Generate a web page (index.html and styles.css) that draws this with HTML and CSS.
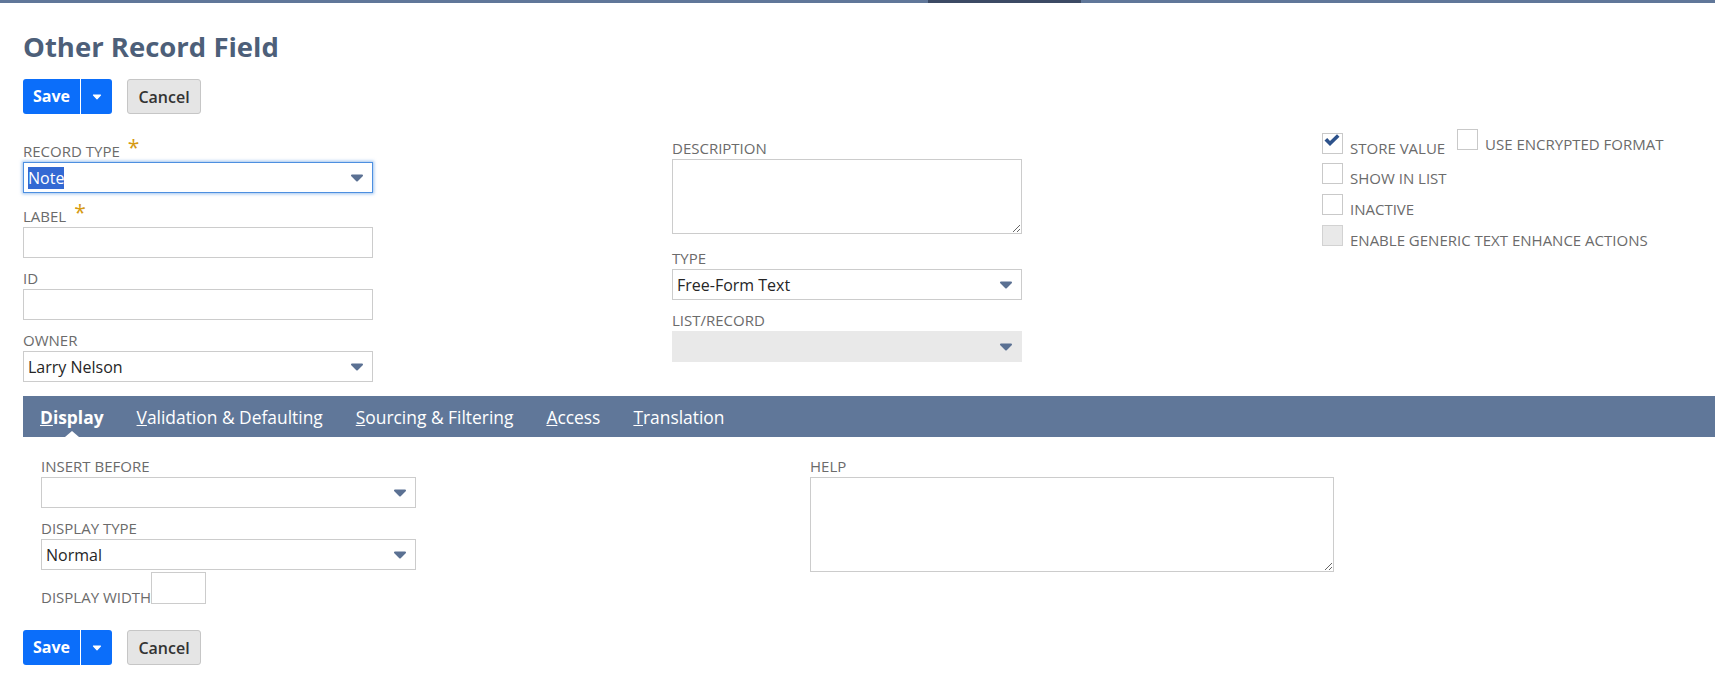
FILE: index.html
```html
<!DOCTYPE html>
<html lang="en">
<head>
  <meta charset="UTF-8">
  <title>Other Record Field</title>
  <link rel="stylesheet" href="styles.css">
</head>
<body>

  <div class="loadbar"><span></span><span class="loadbar-dark"></span><span></span></div>

  <div class="page">
    <h1 class="title">Other Record Field</h1>

    <div class="actions">
      <div class="btn-save">
        <span class="save-main">Save</span>
        <span class="save-more">
          <svg width="10" height="6" viewBox="0 0 10 6"><path d="M1.5 1 H8.5 L5 4.8 Z" fill="#fff" stroke="#fff" stroke-width="1.2" stroke-linejoin="round"/></svg>
        </span>
      </div>
      <button class="btn-cancel">Cancel</button>
    </div>

    <div class="main-form">
      <div class="col col-left">
        <div class="field field-first">
          <label class="lbl">Record Type<span class="req">*</span></label>
          <div class="select focused">
            <span class="sel-text"><span class="picked">Note</span></span>
            <svg class="arrow" width="14" height="8" viewBox="0 0 14 8"><path d="M2 1.5 H12 L7 6.5 Z" fill="#5b7193" stroke="#5b7193" stroke-width="2" stroke-linejoin="round"/></svg>
          </div>
        </div>
        <div class="field">
          <label class="lbl">Label<span class="req">*</span></label>
          <div class="text-input"></div>
        </div>
        <div class="field">
          <label class="lbl">ID</label>
          <div class="text-input"></div>
        </div>
        <div class="field">
          <label class="lbl">Owner</label>
          <div class="select">
            <span class="sel-text">Larry Nelson</span>
            <svg class="arrow" width="14" height="8" viewBox="0 0 14 8"><path d="M2 1.5 H12 L7 6.5 Z" fill="#5b7193" stroke="#5b7193" stroke-width="2" stroke-linejoin="round"/></svg>
          </div>
        </div>
      </div>

      <div class="col col-mid">
        <div class="field field-desc">
          <label class="lbl">Description</label>
          <textarea class="area area-desc"></textarea>
        </div>
        <div class="field">
          <label class="lbl">Type</label>
          <div class="select">
            <span class="sel-text">Free-Form Text</span>
            <svg class="arrow" width="14" height="8" viewBox="0 0 14 8"><path d="M2 1.5 H12 L7 6.5 Z" fill="#5b7193" stroke="#5b7193" stroke-width="2" stroke-linejoin="round"/></svg>
          </div>
        </div>
        <div class="field">
          <label class="lbl">List/Record</label>
          <div class="select disabled">
            <span class="sel-text"></span>
            <svg class="arrow" width="14" height="8" viewBox="0 0 14 8"><path d="M2 1.5 H12 L7 6.5 Z" fill="#5b7193" stroke="#5b7193" stroke-width="2" stroke-linejoin="round"/></svg>
          </div>
        </div>
      </div>

      <div class="col col-right">
        <div class="cb-row">
          <span class="cb"><svg width="19" height="19" viewBox="0 0 19 19"><path d="M1.5 6.5 L4.2 4 L7 7 L14 0.3 L16.5 2.8 L7 12 Z" fill="#2d528b"/></svg></span><span class="cb-text">Store Value</span>
          <span class="cb-extra"><span class="cb"></span><span class="cb-text">Use Encrypted Format</span></span>
        </div>
        <div class="cb-row"><span class="cb"></span><span class="cb-text">Show In List</span></div>
        <div class="cb-row"><span class="cb"></span><span class="cb-text">Inactive</span></div>
        <div class="cb-row"><span class="cb cb-off"></span><span class="cb-text">Enable Generic Text Enhance Actions</span></div>
      </div>
    </div>

    <div class="tabs">
      <div class="tab active"><u>D</u>isplay</div>
      <div class="tab"><u>V</u>alidation &amp; Defaulting</div>
      <div class="tab"><u>S</u>ourcing &amp; Filtering</div>
      <div class="tab"><u>A</u>ccess</div>
      <div class="tab"><u>T</u>ranslation</div>
    </div>

    <div class="tab-body">
      <div class="tab-left">
        <div class="field">
          <label class="lbl">Insert Before</label>
          <div class="select">
            <span class="sel-text"></span>
            <svg class="arrow" width="14" height="8" viewBox="0 0 14 8"><path d="M2 1.5 H12 L7 6.5 Z" fill="#5b7193" stroke="#5b7193" stroke-width="2" stroke-linejoin="round"/></svg>
          </div>
        </div>
        <div class="field field-tight">
          <label class="lbl">Display Type</label>
          <div class="select">
            <span class="sel-text">Normal</span>
            <svg class="arrow" width="14" height="8" viewBox="0 0 14 8"><path d="M2 1.5 H12 L7 6.5 Z" fill="#5b7193" stroke="#5b7193" stroke-width="2" stroke-linejoin="round"/></svg>
          </div>
        </div>
        <div class="width-row">
          <span class="lbl-inline">Display Width</span><span class="small-input"></span>
        </div>
      </div>
      <div class="tab-right">
        <div class="field">
          <label class="lbl">Help</label>
          <textarea class="area area-help"></textarea>
        </div>
      </div>
    </div>

    <div class="actions actions-bottom">
      <div class="btn-save">
        <span class="save-main">Save</span>
        <span class="save-more">
          <svg width="10" height="6" viewBox="0 0 10 6"><path d="M1.5 1 H8.5 L5 4.8 Z" fill="#fff" stroke="#fff" stroke-width="1.2" stroke-linejoin="round"/></svg>
        </span>
      </div>
      <button class="btn-cancel">Cancel</button>
    </div>
  </div>

</body>
</html>
```

FILE: styles.css
```css
body {
  margin: 0;
  font-family: "Open Sans", "Liberation Sans", sans-serif;
  background: #fff;
  color: #333;
}

.loadbar {
  display: grid;
  grid-template-columns: 928px 153px 1fr;
  height: 3px;
}

.loadbar span {
  background: #607799;
}

.loadbar .loadbar-dark {
  background: #3c4a64;
}

.page {
  padding: 0 0 0 23px;
}

.title {
  margin: 25px 0 0;
  font-size: 27.5px;
  line-height: 38px;
  font-weight: 700;
  color: #4d5f79;
}

/* buttons */
.actions {
  display: flex;
  gap: 15px;
  margin-top: 13px;
  height: 35px;
}

.btn-save {
  display: flex;
  width: 89px;
  height: 35px;
  background: #0b6efa;
  border-radius: 3px;
  color: #fff;
}

.save-main {
  width: 57px;
  border-right: 1px solid #fff;
  font-size: 16px;
  font-weight: 700;
  line-height: 35px;
  text-align: center;
}

.save-more {
  flex: 1;
  display: flex;
  align-items: center;
  justify-content: center;
  padding-top: 1px;
}

.btn-cancel {
  width: 74px;
  height: 35px;
  padding: 0;
  background: #e5e5e5;
  border: 1px solid #c6c6c6;
  border-radius: 3px;
  font-family: inherit;
  font-size: 16px;
  font-weight: 600;
  color: #333;
}

/* main form */
.main-form {
  display: grid;
  grid-template-columns: 350px 350px 1fr;
  column-gap: 299px;
  align-items: start;
  margin-top: 14px;
}

.col-left {
  margin-top: 14px;
}

.col-mid {
  margin-top: 11px;
}

.col-right {
  margin-top: 1px;
  margin-left: 1px;
}

.field {
  margin-bottom: 11px;
}

.field:last-child {
  margin-bottom: 0;
}

.field-first {
  margin-bottom: 14px;
}

.field-desc {
  margin-bottom: 15px;
}

.lbl {
  display: block;
  height: 18px;
  margin-bottom: 2px;
  font-size: 15px;
  line-height: 18px;
  color: #6b6b6b;
  text-transform: uppercase;
  white-space: nowrap;
}

.req {
  display: inline-block;
  margin-left: 8px;
  font-size: 21px;
  line-height: 10px;
  color: #d69a12;
  vertical-align: 2px;
}

.text-input,
.select {
  box-sizing: border-box;
  height: 31px;
  border: 1px solid #cccccc;
  background: #fff;
}

.select {
  display: flex;
  align-items: center;
  padding: 0 8px 0 4px;
  font-size: 16px;
  color: #262626;
}

.sel-text {
  flex: 1;
  line-height: 22px;
  white-space: nowrap;
}

.select .arrow {
  flex: none;
  margin-top: 1px;
}

.select.focused {
  border-color: #4d8fe0;
  box-shadow: 0 0 3px 1px rgba(77, 143, 224, 0.55);
}

.picked {
  background: #3369d3;
  color: #fff;
}

.select.disabled {
  background: #e9e9e9;
  border-color: #e9e9e9;
}

.area {
  display: block;
  box-sizing: border-box;
  margin: 0;
  border: 1px solid #cccccc;
  font-family: inherit;
}

.area-desc {
  width: 350px;
  height: 75px;
}

.area-help {
  width: 524px;
  height: 95px;
}

/* checkboxes */
.cb-row {
  height: 31px;
  font-size: 15px;
  line-height: 31px;
  color: #6b6b6b;
  text-transform: uppercase;
  white-space: nowrap;
}

.cb-row:first-child {
  margin-bottom: 3px;
}

.cb {
  display: inline-block;
  box-sizing: border-box;
  width: 21px;
  height: 21px;
  margin-right: 7px;
  border: 1px solid #c9c9c9;
  background: #fff;
  overflow: hidden;
  vertical-align: baseline;
}

.cb svg {
  display: block;
}

.cb-off {
  background: #e9e9e9;
  border-color: #d2d2d2;
}

.cb-extra {
  display: inline-block;
  margin-left: 8px;
  vertical-align: 4px;
  line-height: 21px;
}

/* tabs */
.tabs {
  display: flex;
  gap: 33px;
  height: 41px;
  margin-top: 14px;
  padding-left: 17px;
  background: #607799;
}

.tab {
  position: relative;
  padding-top: 2px;
  font-size: 17.4px;
  line-height: 39px;
  color: #fff;
  white-space: nowrap;
}

.tab.active {
  font-weight: 700;
}

.tab.active::after {
  content: "";
  position: absolute;
  left: 50%;
  bottom: 0;
  margin-left: -7px;
  border-left: 7px solid transparent;
  border-right: 7px solid transparent;
  border-bottom: 6px solid #fff;
}

.tab-body {
  display: flex;
  gap: 394px;
  padding: 20px 0 0 18px;
}

.tab-left {
  width: 375px;
}

.field-tight {
  margin-bottom: 2px;
}

.width-row {
  font-size: 15px;
  line-height: 20px;
  color: #6b6b6b;
  text-transform: uppercase;
}

.small-input {
  display: inline-block;
  box-sizing: border-box;
  width: 55px;
  height: 32px;
  border: 1px solid #cccccc;
  vertical-align: -1px;
}

.actions-bottom {
  margin-top: 23px;
}
```
